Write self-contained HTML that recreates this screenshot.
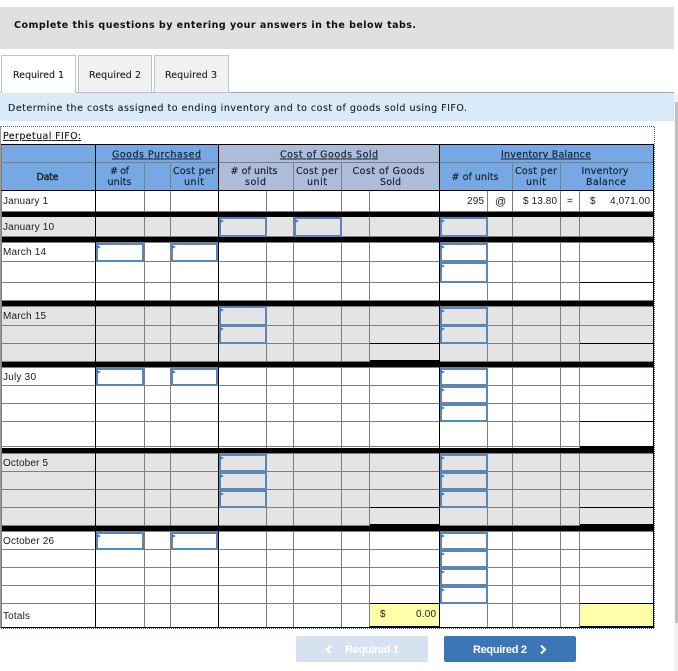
<!DOCTYPE html>
<html><head><meta charset="utf-8"><style>
html,body{margin:0;padding:0;background:#fff;width:678px;height:671px;overflow:hidden}
svg{display:block;position:absolute;left:0;top:0}
text{fill:#1c1c1c;font-family:"Liberation Sans",Arial,sans-serif;font-size:10px}
.v{font-family:"DejaVu Sans",Verdana,sans-serif;font-size:9.500px;stroke:#222;stroke-width:.12}
.h{font-family:"DejaVu Sans",Verdana,sans-serif;font-size:9.500px;fill:#14202f;text-anchor:middle;stroke:#14202f;stroke-width:.15}
.u{text-decoration:underline}
.i{fill:none;stroke:#5b86b8;stroke-width:2}
</style></head><body>
<svg width="678" height="671" viewBox="0 0 678 671" xmlns="http://www.w3.org/2000/svg">
<rect x="674" y="93" width="4" height="578" fill="#f1f1f1"/>
<rect x="675" y="102" width="3" height="521" fill="#c1c1c1"/>
<rect x="0" y="7" width="674" height="42" fill="#e0e0e0"/>
<text x="14" y="28" class="v" style="font-weight:bold;font-size:9.500px;fill:#111;stroke:none" textLength="402">Complete this questions by entering your answers in the below tabs.</text>
<rect x="0" y="92" width="674" height="1" fill="#a8a8a8"/>
<rect x="1.500" y="55.500" width="74" height="38" fill="#fff" stroke="#c4c4c4"/>
<rect x="78.500" y="55.500" width="73" height="37" fill="#f1f1f1" stroke="#c4c4c4"/>
<rect x="154.500" y="55.500" width="74" height="37" fill="#f1f1f1" stroke="#c4c4c4"/>
<rect x="1" y="92" width="75" height="2" fill="#fff"/>
<text x="13" y="78" class="v" textLength="51">Required 1</text>
<text x="89" y="78" class="v" textLength="52">Required 2</text>
<text x="165" y="78" class="v" textLength="52">Required 3</text>
<rect x="0" y="93" width="674" height="28" fill="#d9ebf9"/>
<text x="8" y="111" class="v" textLength="459">Determine the costs assigned to ending inventory and to cost of goods sold using FIFO.</text>

<rect x="1" y="127" width="653" height="501" fill="#fff"/>
<path d="M1 126.500H654.500V628.500H1" fill="none" stroke="#2a6fb5" stroke-dasharray="1 1"/>
<path d="M0.500 126V628" fill="none" stroke="#999"/>
<text x="3" y="139" class="v u" textLength="78" style="fill:#111">Perpetual FIFO:</text>

<!-- header fills -->
<rect x="1" y="145" width="218" height="46" fill="#76a9e3"/>
<rect x="219" y="145" width="221" height="46" fill="#adbcd8"/>
<rect x="440" y="145" width="214" height="46" fill="#76a9e3"/>
<!-- gray rows -->
<g fill="#e4e4e4">
<rect x="1" y="217" width="653" height="20"/>
<rect x="1" y="306" width="653" height="56"/>
<rect x="1" y="453" width="653" height="73"/>
</g>
<rect x="370" y="604" width="70" height="24" fill="#ffffaa"/>
<rect x="580" y="604" width="74" height="24" fill="#ffffaa"/>

<!-- header lines -->
<path d="M1 162.500H654M144.500 163V191M170.500 163V191M293.500 163V191M341.500 163V191M512.500 163V191M560.500 163V191" stroke="#7f7f7f" fill="none"/>
<!-- horizontal gray -->
<path fill="none" stroke="#7f7f7f" d="M1 211.500H654M1 236.500H654M1 242.500H654M1 261.500H654M1 282.500H654M1 300.500H654M1 306.500H654M1 325.500H654M1 343.500H654M1 361.500H654M1 367.500H654M1 385.500H654M1 403.500H654M1 421.500H654M1 446.500H654M1 453.500H654M1 471.500H654M1 489.500H654M1 507.500H654M1 525.500H654M1 531.500H654M1 549.500H654M1 567.500H654M1 585.500H654M1 603.500H654"/>
<!-- vertical gray -->
<path fill="none" stroke="#7f7f7f" d="M1.500 145V628M144.500 191V627M170.500 191V627M266.500 191V627M293.500 191V627M341.500 191V627M369.500 191V627M487.500 191V627M512.500 191V627M560.500 191V627M579.500 191V627"/>
<!-- black bars -->
<g fill="#000">
<rect x="2" y="212" width="652" height="5"/>
<rect x="2" y="237" width="652" height="5"/>
<rect x="2" y="301" width="652" height="5"/>
<rect x="2" y="362" width="652" height="5"/>
<rect x="2" y="448" width="652" height="5"/>
<rect x="2" y="526" width="652" height="5"/>
<rect x="370" y="360" width="70" height="2"/>
<rect x="580" y="446" width="74" height="2"/>
<rect x="370" y="524" width="70" height="2"/>
<rect x="580" y="524" width="74" height="2"/>
</g>
<!-- black lines -->
<path fill="none" stroke="#000" d="M1 144.500H654M1 190.500H654M95.500 144V627M218.500 144V627M439.500 144V627M653.500 144V627M1 627.500H654M580 282.500H654M370 343.500H440M580 343.500H654M580 421.500H654M370 507.500H440M580 507.500H654M370 603.500H440M580 603.500H654"/>
<rect x="370" y="626" width="70" height="2" fill="#000"/>
<rect x="580" y="626" width="74" height="2" fill="#000"/>

<!-- inputs -->
<g class="i">
<rect class="i" x="220" y="218" width="46" height="18"/><rect class="i" x="295" y="218" width="46" height="18"/><rect class="i" x="441" y="218" width="46" height="18"/>
<rect class="i" x="97" y="244" width="46" height="17"/><rect class="i" x="172" y="244" width="45" height="17"/><rect class="i" x="441" y="244" width="46" height="17"/><rect class="i" x="441" y="263" width="46" height="19"/>
<rect class="i" x="220" y="307" width="46" height="18"/><rect class="i" x="220" y="326" width="46" height="17"/><rect class="i" x="441" y="308" width="46" height="17"/><rect class="i" x="441" y="326" width="46" height="17"/>
<rect class="i" x="97" y="369" width="46" height="16"/><rect class="i" x="172" y="369" width="45" height="16"/><rect class="i" x="441" y="369" width="46" height="16"/><rect class="i" x="441" y="387" width="46" height="16"/><rect class="i" x="441" y="405" width="46" height="16"/>
<rect class="i" x="220" y="455" width="46" height="16"/><rect class="i" x="220" y="473" width="46" height="16"/><rect class="i" x="220" y="491" width="46" height="16"/><rect class="i" x="441" y="455" width="46" height="16"/><rect class="i" x="441" y="473" width="46" height="16"/><rect class="i" x="441" y="491" width="46" height="16"/>
<rect class="i" x="97" y="533" width="46" height="16"/><rect class="i" x="172" y="533" width="45" height="16"/><rect class="i" x="441" y="533" width="46" height="16"/><rect class="i" x="441" y="551" width="46" height="16"/><rect class="i" x="441" y="569" width="46" height="16"/><rect class="i" x="441" y="587" width="46" height="16"/>
</g>
<!-- flags -->
<path fill="#3f7fc4" d="M220 219l4 2-4 2zM295 219l4 2-4 2zM441 219l4 2-4 2zM97 245l4 2-4 2zM172 245l4 2-4 2zM441 245l4 2-4 2zM441 264l4 2-4 2zM220 308l4 2-4 2zM220 327l4 2-4 2zM441 309l4 2-4 2zM441 327l4 2-4 2zM97 370l4 2-4 2zM172 370l4 2-4 2zM441 370l4 2-4 2zM441 388l4 2-4 2zM441 406l4 2-4 2zM220 456l4 2-4 2zM220 474l4 2-4 2zM220 492l4 2-4 2zM441 456l4 2-4 2zM441 474l4 2-4 2zM441 492l4 2-4 2zM97 534l4 2-4 2zM172 534l4 2-4 2zM441 534l4 2-4 2zM441 552l4 2-4 2zM441 570l4 2-4 2zM441 588l4 2-4 2z"/>

<!-- header text -->
<text x="156.500" y="157.500" class="h u" textLength="89">Goods Purchased</text>
<text x="329" y="157.500" class="h u" textLength="98">Cost of Goods Sold</text>
<text x="546" y="157.500" class="h u" textLength="90">Inventory Balance</text>
<text x="47.500" y="180" class="h" textLength="22" style="stroke-width:.4">Date</text>
<text x="119.500" y="174" class="h" textLength="19"># of</text>
<text x="119.500" y="185" class="h" textLength="24">units</text>
<text x="194" y="174" class="h" textLength="42">Cost per</text>
<text x="194" y="185" class="h" textLength="20">unit</text>
<text x="254" y="174" class="h" textLength="47"># of units</text>
<text x="255.500" y="185" class="h" textLength="21">sold</text>
<text x="317" y="174" class="h" textLength="42">Cost per</text>
<text x="317" y="185" class="h" textLength="20">unit</text>
<text x="388.500" y="174" class="h" textLength="72">Cost of Goods</text>
<text x="390.500" y="185" class="h" textLength="21">Sold</text>
<text x="475" y="180" class="h" textLength="47"># of units</text>
<text x="536" y="174" class="h" textLength="42">Cost per</text>
<text x="536" y="185" class="h" textLength="20">unit</text>
<text x="605" y="174" class="h" textLength="47">Inventory</text>
<text x="606" y="185" class="h" textLength="40">Balance</text>

<!-- row labels -->
<text x="3" y="204" textLength="45">January 1</text>
<text x="3" y="230" textLength="51">January 10</text>
<text x="3" y="255" textLength="43">March 14</text>
<text x="3" y="319" textLength="43">March 15</text>
<text x="3" y="380" textLength="33">July 30</text>
<text x="3" y="466" textLength="45">October 5</text>
<text x="3" y="544" textLength="51">October 26</text>
<text x="3" y="619" textLength="27">Totals</text>

<text x="467" y="204" textLength="17">295</text>
<text x="495" y="205" style="font-size:11px">@</text>
<text x="523" y="204" textLength="34">$ 13.80</text>
<text x="567" y="204">=</text>
<text x="590" y="204">$</text>
<text x="610" y="204" textLength="40">4,071.00</text>
<text x="380" y="617">$</text>
<text x="416" y="617" textLength="20">0.00</text>

<!-- buttons -->
<rect x="296" y="636" width="132" height="26" rx="2" fill="#d7e2f0"/>
<rect x="444" y="636" width="132" height="26" rx="2" fill="#3c76b7"/>
<path d="M331 646l-4 3.500 4 3.500" fill="none" stroke="#fff" stroke-width="2"/>
<text x="345" y="653" style="font-size:11px;font-weight:bold;fill:#fff" textLength="54">Required 1</text>
<text x="473" y="653" style="font-size:11px;font-weight:bold;fill:#fff" textLength="54">Required 2</text>
<path d="M541 645.500l4 4-4 4" fill="none" stroke="#fff" stroke-width="2"/>
</svg>
</body></html>
